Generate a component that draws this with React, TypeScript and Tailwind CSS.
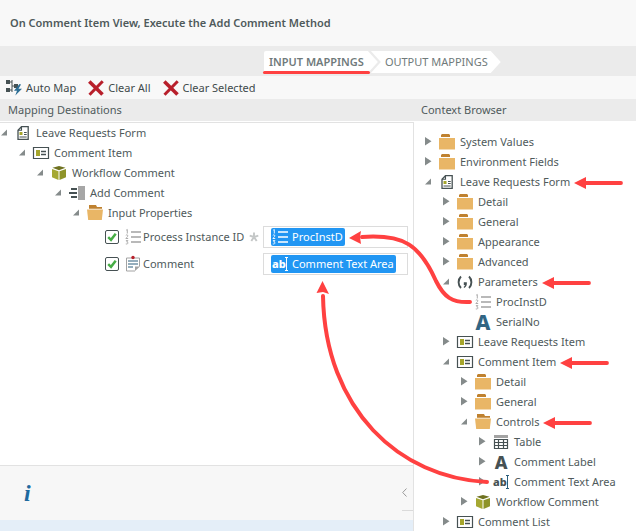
import { useState } from "react"
import type { ReactNode } from "react"
import clsx from "clsx"

type IconName =
    | "form"
    | "view"
    | "cube"
    | "method"
    | "folder"
    | "folderOpen"
    | "params"
    | "number"
    | "serial"
    | "label"
    | "table"
    | "textArea"

type TreeItem = {
    label: string
    icon: IconName
    level: number
    state?: "open" | "closed"
    marked?: boolean
}

const destinations: TreeItem[] = [
    { label: "Leave Requests Form", icon: "form", level: 0, state: "open" },
    { label: "Comment Item", icon: "view", level: 1, state: "open" },
    { label: "Workflow Comment", icon: "cube", level: 2, state: "open" },
    { label: "Add Comment", icon: "method", level: 3, state: "open" },
    { label: "Input Properties", icon: "folderOpen", level: 4, state: "open" },
]

const context: TreeItem[] = [
    { label: "System Values", icon: "folder", level: 0, state: "closed" },
    { label: "Environment Fields", icon: "folder", level: 0, state: "closed" },
    { label: "Leave Requests Form", icon: "form", level: 0, state: "open", marked: true },
    { label: "Detail", icon: "folder", level: 1, state: "closed" },
    { label: "General", icon: "folder", level: 1, state: "closed" },
    { label: "Appearance", icon: "folder", level: 1, state: "closed" },
    { label: "Advanced", icon: "folder", level: 1, state: "closed" },
    { label: "Parameters", icon: "params", level: 1, state: "open", marked: true },
    { label: "ProcInstD", icon: "number", level: 2 },
    { label: "SerialNo", icon: "serial", level: 2 },
    { label: "Leave Requests Item", icon: "view", level: 1, state: "closed" },
    { label: "Comment Item", icon: "view", level: 1, state: "open", marked: true },
    { label: "Detail", icon: "folder", level: 2, state: "closed" },
    { label: "General", icon: "folder", level: 2, state: "closed" },
    { label: "Controls", icon: "folderOpen", level: 2, state: "open", marked: true },
    { label: "Table", icon: "table", level: 3, state: "closed" },
    { label: "Comment Label", icon: "label", level: 3, state: "closed" },
    { label: "Comment Text Area", icon: "textArea", level: 3, state: "closed" },
    { label: "Workflow Comment", icon: "cube", level: 2, state: "closed" },
    { label: "Comment List", icon: "view", level: 1, state: "closed" },
]

const indents = ["pl-0", "pl-[18px]", "pl-[36px]", "pl-[54px]", "pl-[72px]"]

function Svg({ children }: { children: ReactNode }) {
    return (
        <svg viewBox="0 0 16 16" className="size-4 shrink-0 overflow-visible" aria-hidden="true">
            {children}
        </svg>
    )
}

function NumberIcon({ light }: { light?: boolean }) {
    const color = light ? "#fff" : "#a3a3a3"
    return (
        <Svg>
            <path d="M6 3h10M6 8h10M6 13h10" stroke={color} strokeWidth="1.6" />
            <path
                d="M1.2 1.2 2.3 .5v4M.8 6.4c.4-.8 2.2-.7 2 .5C2.7 7.8 1.5 8.4 .9 9.5h2.3M.9 11.6h2L1.7 13c2 0 1.6 2.5-.9 1.9"
                fill="none"
                stroke={color}
                strokeWidth=".9"
            />
        </Svg>
    )
}

function TextAreaIcon({ light }: { light?: boolean }) {
    return (
        <span className="flex w-4 shrink-0 items-center justify-between" aria-hidden="true">
            <span
                className={clsx(
                    "w-[13px] text-[11px] leading-4 font-extrabold",
                    light ? "text-white" : "text-[#465153]",
                )}
            >
                ab
            </span>
            <svg viewBox="0 0 3 14" className="h-3.5 w-[3px] shrink-0">
                <path
                    d="M0 .5h3M1.5 .5v13M0 13.5h3"
                    stroke={light ? "#fff" : "#2c5f7c"}
                    strokeWidth="1"
                />
            </svg>
        </span>
    )
}

function Icon({ name }: { name: IconName }) {
    switch (name) {
        case "form":
            return (
                <Svg>
                    <path d="M6.5 1.7H13.2V14.3H3V5.2Z" fill="#fff" stroke="#465153" strokeWidth="1.3" />
                    <path d="M6.5 1.7V5.2H3" fill="none" stroke="#465153" strokeWidth="1.1" />
                    <path d="M4.5 7h3v3h-3Z" fill="#a5a52b" />
                    <path d="M9 7.5h2.7M9 9.5h2.7M4.5 12h7.2" stroke="#465153" strokeWidth="1.2" />
                </Svg>
            )
        case "view":
            return (
                <Svg>
                    <path d="M.5 2.5H15.5V13.5H.5Z" fill="#fff" stroke="#465153" strokeWidth="1.2" />
                    <path d="M3 5h4v6H3Z" fill="#a5a52b" />
                    <path d="M8 6.5h5M8 9.5h5" stroke="#465153" strokeWidth="1.7" />
                </Svg>
            )
        case "cube":
            return (
                <Svg>
                    <path d="M8 1 14.5 2.8 8 5.3 1.5 2.8Z" fill="#6f7220" />
                    <path d="M1 3.9 7.5 6.2V15L1 12.3Z" fill="#a5a832" />
                    <path d="M15 3.9 8.5 6.2V15L15 12.3Z" fill="#8f9429" />
                </Svg>
            )
        case "method":
            return (
                <Svg>
                    <path d="M9 1h7v14H9Z" fill="#a6a6a6" />
                    <path d="M2 4h6M0 8h8M2 12h6" stroke="#465153" strokeWidth="2" />
                </Svg>
            )
        case "folder":
            return (
                <Svg>
                    <path d="M3 0h7l1 1v2H2V1Z" fill="#bf812f" />
                    <path d="M0 4h16v11.500H0Z" fill="#e9b666" />
                </Svg>
            )
        case "folderOpen":
            return (
                <Svg>
                    <path d="M2 0h7l1 2h5v1.700H2Z" fill="#bf812f" />
                    <path d="M0 4.500h16L14.800 15H1.200Z" fill="#e9b666" />
                </Svg>
            )
        case "params":
            return (
                <Svg>
                    <path
                        d="M4 2.500C.8 5.500.8 11 4 14M12 2.500c3.200 3 3.200 8.500 0 11.500"
                        fill="none"
                        stroke="#465153"
                        strokeWidth="1.900"
                    />
                    <path d="M6.800 8.200h3c.4 2.600-.5 4.600-2.600 5.800l-.6-.9c.8-.6 1.300-1.300 1.300-2.100H6.800Z" fill="#465153" />
                </Svg>
            )
        case "number":
            return <NumberIcon />
        case "serial":
        case "label":
            return (
                <span
                    aria-hidden="true"
                    className={clsx(
                        "flex w-4 shrink-0 justify-center leading-4 font-extrabold",
                        name === "serial" ? "text-[21px] text-[#316583]" : "text-[18px] text-[#465153]",
                    )}
                >
                    A
                </span>
            )
        case "table":
            return (
                <Svg>
                    <path d="M1 1h14v3H1Z" fill="#a3a3a3" />
                    <path
                        d="M1.500 5.500H14.500V14.500H1.500ZM1.500 8.500H14.500M1.500 11.500H14.500M5.500 5.500V14.500M10.500 5.500V14.500"
                        fill="none"
                        stroke="#465153"
                        strokeWidth="1.200"
                    />
                </Svg>
            )
        case "textArea":
            return <TextAreaIcon />
    }
}

function Expander({ state }: { state?: "open" | "closed" }) {
    return (
        <svg viewBox="0 0 8 10" className="mr-[7px] h-2.5 w-2 shrink-0" aria-hidden="true">
            {state === "open" && <path d="M7 1.500v6H1Z" fill="#858b8b" />}
            {state === "closed" && <path d="M1 0 7.500 4.200 1 8.500Z" fill="#858b8b" />}
        </svg>
    )
}

function Pointer() {
    return (
        <svg viewBox="0 0 49 14" className="mt-px ml-1 h-3.5 w-[49px] shrink-0" aria-hidden="true">
            <path d="M10 7h37" stroke="#ff4141" strokeWidth="3.800" strokeLinecap="round" />
            <path d="M0 7 12 1v12Z" fill="#ff4141" />
        </svg>
    )
}

function Tree({ items, label }: { items: TreeItem[]; label: string }) {
    return (
        <ul role="tree" aria-label={label}>
            {items.map((item, i) => (
                <li
                    key={i}
                    role="treeitem"
                    aria-expanded={item.state ? item.state === "open" : undefined}
                    className={clsx("flex h-5 items-center whitespace-nowrap", indents[item.level])}
                >
                    <Expander state={item.state} />
                    <Icon name={item.icon} />
                    <span className="ml-[5px]">{item.label}</span>
                    {item.marked && <Pointer />}
                </li>
            ))}
        </ul>
    )
}

function MappingRow({
    id,
    label,
    icon,
    required,
    children,
}: {
    id: string
    label: string
    icon: ReactNode
    required?: boolean
    children: ReactNode
}) {
    const [checked, setChecked] = useState(true)

    return (
        <div className="flex h-[27px] items-center">
            <div className="flex w-[263px] shrink-0 items-center pr-1 pl-[105px]">
                <span className="relative mr-1.5 size-3.5 shrink-0">
                    <input
                        id={id}
                        type="checkbox"
                        checked={checked}
                        onChange={() => setChecked(!checked)}
                        className="block size-3.5 appearance-none rounded-[2px] border border-[#465153] bg-white"
                    />
                    {checked && (
                        <svg
                            viewBox="0 0 14 14"
                            className="pointer-events-none absolute inset-0 size-3.5"
                            aria-hidden="true"
                        >
                            <path d="M3.200 7.200 6 9.800 10.700 3.800" fill="none" stroke="#46ad45" strokeWidth="2.500" />
                        </svg>
                    )}
                </span>
                {icon}
                <label htmlFor={id} className="ml-0.5 grow whitespace-nowrap">
                    {label}
                </label>
                {required && (
                    <svg viewBox="0 0 10 10" className="size-2.5 shrink-0" aria-hidden="true">
                        <path
                            d="M5 5V.5M5 5 .7 3.700M5 5 9.300 3.700M5 5 2.300 9M5 5 7.700 9"
                            stroke="#c4c7c7"
                            strokeWidth="1.900"
                        />
                    </svg>
                )}
            </div>
            <div className="mr-[5px] flex h-[22px] grow items-center border border-[#dcdcdc] bg-white pl-[7px]">
                {children}
            </div>
        </div>
    )
}

function Chip({ icon, label }: { icon: ReactNode; label: string }) {
    return (
        <span className="flex h-[18px] items-center gap-1 rounded-[2px] bg-[#2196f3] pr-0.5 pl-px whitespace-nowrap text-white">
            {icon}
            {label}
        </span>
    )
}

function ClearIcon() {
    return (
        <Svg>
            <path d="M1.300 1.500 14.500 14.500" stroke="#b81f2b" strokeWidth="3.600" />
            <path d="M14.700 1.200 1.500 14.700" stroke="#b81f2b" strokeWidth="3" />
        </Svg>
    )
}

function AutoMapIcon() {
    return (
        <Svg>
            <path d="M0 0h4v4H0ZM0 8h4v4H0ZM8 4h4v4H8Z" fill="#465153" />
            <path d="M6 0v12M4 2h2M4 10h2M6 6h2" stroke="#465153" strokeWidth="1" />
            <path d="M13.500 4 8 10.800h3L9.300 15.500 16 8.800h-3.500L15 4.500Z" fill="#2c6d94" />
        </Svg>
    )
}

function Connections() {
    return (
        <svg
            className="pointer-events-none absolute top-0 left-0 h-[531px] w-[636px]"
            viewBox="0 0 636 531"
            aria-hidden="true"
        >
            <g fill="none" stroke="#ff4141" strokeWidth="4" strokeLinecap="round">
                <path d="M470 302C452 303 444 297 436 281C420 245 404 234 362 237" />
                <path d="M487 482C400 478 325 410 323 296" />
            </g>
            <path d="M349 238 361 231 360 237 361 244Z" fill="#ff4141" />
            <path d="M322.500 281 329 294 323 292 316.500 293Z" fill="#ff4141" />
        </svg>
    )
}

function App() {
    return (
        <div className="relative flex h-screen flex-col overflow-hidden bg-white font-['Noto_Sans',sans-serif] text-[11px] leading-4 text-[#4f5a5b]">
            <header className="flex h-[46px] shrink-0 items-center bg-[#f8f8f8] pl-2.5">
                <h1 className="font-semibold">On Comment Item View, Execute the Add Comment Method</h1>
            </header>

            <nav className="flex h-[30px] shrink-0 items-start bg-[#ebebeb] pt-[5px] pl-[264px] whitespace-nowrap text-[#707a7b]">
                <button className="relative h-[22px]">
                    <span className="flex h-full items-center rounded-l-[2px] bg-white pr-3.5 pl-[5px] font-semibold [clip-path:polygon(0_0,calc(100%-10px)_0,100%_50%,calc(100%-10px)_100%,0_100%)]">
                        INPUT MAPPINGS
                    </span>
                    <span className="absolute right-2 -bottom-px -left-px h-[3px] rounded-full bg-[#ff4141]" />
                </button>
                <button className="-ml-[7px] flex h-[22px] items-center bg-white pr-[13px] pl-3.5 [clip-path:polygon(0_0,calc(100%-10px)_0,100%_50%,calc(100%-10px)_100%,0_100%,10px_50%)]">
                    OUTPUT MAPPINGS
                </button>
            </nav>

            <div className="flex h-[23px] shrink-0 items-center gap-3 bg-[#f8f8f8] pl-1.5 text-[#3f4a4b]">
                <button className="flex items-center gap-1">
                    <AutoMapIcon />
                    Auto Map
                </button>
                <button className="flex items-center gap-1">
                    <ClearIcon />
                    Clear All
                </button>
                <button className="flex items-center gap-1">
                    <ClearIcon />
                    Clear Selected
                </button>
            </div>

            <main className="flex min-h-0 grow">
                <section className="flex min-w-0 grow flex-col">
                    <h2 className="flex h-[22px] shrink-0 items-center bg-[#ebebeb] pl-2">
                        Mapping Destinations
                    </h2>
                    <div className="mt-px grow border-t border-[#e2e2e2]">
                        <Tree items={destinations} label="Mapping Destinations" />
                        <MappingRow id="process-instance" label="Process Instance ID" icon={<NumberIcon />} required>
                            <Chip icon={<NumberIcon light />} label="ProcInstD" />
                        </MappingRow>
                        <MappingRow
                            id="comment"
                            label="Comment"
                            icon={
                                <Svg>
                                    <path d="M10 15H1.500V2H14.500V10.500" fill="none" stroke="#a3a3a3" />
                                    <path d="M10 15V10.500H15Z" fill="#a3a3a3" />
                                    <path d="M3 5h10M3 8h10M3 11h5" stroke="#2c5f7c" strokeWidth="1.200" />
                                    <circle cx="8" cy="1.500" r="1.700" fill="#b8202b" />
                                </Svg>
                            }
                        >
                            <Chip icon={<TextAreaIcon light />} label="Comment Text Area" />
                        </MappingRow>
                    </div>
                    <aside className="flex h-[55px] shrink-0 items-center justify-between border-t border-[#e2e2e2] bg-[#f7f7f7] pl-6">
                        <span className="font-['Liberation_Serif',serif] text-[24px] leading-6 font-bold text-[#1f6a9f] italic">
                            i
                        </span>
                        <button
                            aria-label="Collapse"
                            className="flex h-9 w-[11px] items-center border-b border-[#dadada]"
                        >
                            <svg viewBox="0 0 5 9" className="h-[9px] w-[5px]" aria-hidden="true">
                                <path d="M4.500 .5 .7 4.500 4.500 8.500" fill="none" stroke="#999" />
                            </svg>
                        </button>
                    </aside>
                    <div className="h-[11px] shrink-0 bg-[#e4eef8]" />
                </section>

                <section className="flex w-[223px] shrink-0 flex-col">
                    <h2 className="flex h-[22px] shrink-0 items-center bg-[#ebebeb] pl-2">
                        Context Browser
                    </h2>
                    <div className="mt-px min-h-0 grow overflow-hidden border-l border-[#e2e2e2] pt-2.5 pl-2.5">
                        <Tree items={context} label="Context Browser" />
                    </div>
                </section>
            </main>
            <Connections />
        </div>
    )
}

export default App
